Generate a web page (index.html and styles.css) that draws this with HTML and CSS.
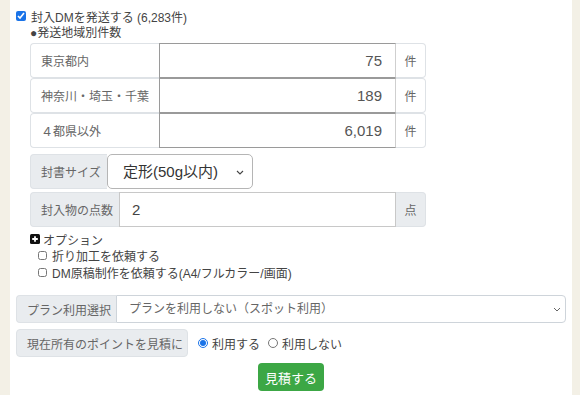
FILE: index.html
```html
<!DOCTYPE html>
<html lang="ja">
<head>
<meta charset="utf-8">
<title>封入DM</title>
<link rel="stylesheet" href="styles.css">
</head>
<body>
<div class="page">
  <label class="main-check"><input type="checkbox" class="chk" checked><span>封入DMを発送する (6,283件)</span></label>
  <div class="section">
    <div class="sub-title">●発送地域別件数</div>
    <div class="region-row">
      <div class="cell-label">東京都内</div>
      <input class="num" type="text" value="75">
      <div class="cell-unit">件</div>
    </div>
    <div class="region-row">
      <div class="cell-label">神奈川・埼玉・千葉</div>
      <input class="num" type="text" value="189">
      <div class="cell-unit">件</div>
    </div>
    <div class="region-row">
      <div class="cell-label">４都県以外</div>
      <input class="num" type="text" value="6,019">
      <div class="cell-unit">件</div>
    </div>

    <div class="group envelope">
      <div class="g-label">封書サイズ</div>
      <div class="select-wrap env-select">
        <select class="g-select"><option>定形(50g以内)</option></select>
        <svg class="chev" viewBox="0 0 8 5" width="8" height="5"><path d="M1 1 L4 4 L7 1" fill="none" stroke="#444" stroke-width="1.1"/></svg>
      </div>
    </div>

    <div class="group count">
      <div class="g-label">封入物の点数</div>
      <input class="g-input" type="text" value="2">
      <div class="g-unit">点</div>
    </div>

    <div class="option-head">
      <svg class="plus" viewBox="0 0 10 10" width="10" height="10"><rect x="0" y="0" width="10" height="10" rx="1.5" fill="#111"/><path d="M5 2.2 V7.8 M2.2 5 H7.8" stroke="#fff" stroke-width="1.8"/></svg>
      <span>オプション</span>
    </div>
    <ul class="option-list">
      <li><label><input type="checkbox" class="chk-sm"><span>折り加工を依頼する</span></label></li>
      <li><label><input type="checkbox" class="chk-sm"><span>DM原稿制作を依頼する(A4/フルカラー/画面)</span></label></li>
    </ul>
  </div>

  <div class="group plan">
    <div class="g-label">プラン利用選択</div>
    <div class="select-wrap plan-select">
      <select class="g-select"><option>プランを利用しない（スポット利用）</option></select>
      <svg class="chev" viewBox="0 0 8 5" width="8" height="5"><path d="M1 1 L4 4 L7 1" fill="none" stroke="#666" stroke-width="1"/></svg>
    </div>
  </div>

  <div class="group points">
    <div class="g-label">現在所有のポイントを見積に</div>
    <div class="radios">
      <label><input type="radio" name="pt" class="rad" checked><span>利用する</span></label>
      <label><input type="radio" name="pt" class="rad"><span>利用しない</span></label>
    </div>
  </div>

  <div class="actions"><button class="btn" type="button">見積する</button></div>
</div>
</body>
</html>
```

FILE: styles.css
```css
* { box-sizing: border-box; }
html, body { margin: 0; padding: 0; }
body {
  background: #f3f0e6;
  font-family: "Liberation Sans", "Noto Sans CJK JP", sans-serif;
  color: #444;
  font-size: 12px;
}
.page {
  margin: 0 8px 0 10px;
  background: #fff;
  min-height: 395px;
  padding: 8px 6px 0 6px;
}
.main-check {
  display: flex;
  align-items: center;
  height: 16px;
  font-size: 12px;
  color: #444;
}
.chk {
  width: 10px; height: 10px; margin: 0 5px 0 0;
  accent-color: #1a73e8;
}
.section { margin-left: 14px; }
.sub-title {
  height: 16px; line-height: 16px;
  margin-top: 1px;
  color: #444;
}
.region-row {
  display: flex;
  height: 35px;
  width: 396px;
}
.sub-title + .region-row { margin-top: 2px; }
.cell-label {
  width: 129px;
  border: 1px solid #dee2e6;
  border-right: none;
  border-radius: 4px 0 0 4px;
  padding-left: 10px;
  display: flex; align-items: center;
  color: #666;
}
.num {
  width: 237px;
  height: 35px;
  border: 1px solid #9a9a9a;
  border-right-color: #cfcfcf;
  margin: 0;
  padding: 0 13px 0 0;
  text-align: right;
  font-family: inherit;
  font-size: 15px;
  color: #555;
  outline: none;
}
.cell-unit {
  width: 30px;
  border: 1px solid #dee2e6;
  border-left: none;
  border-radius: 0 4px 4px 0;
  display: flex; align-items: center; justify-content: center;
  color: #666;
}
.group {
  display: flex;
  height: 35px;
}
.g-label {
  background: #e9ecef;
  border: 1px solid #dee2e6;
  border-radius: 4px 0 0 4px;
  padding: 0 10px;
  display: flex; align-items: center;
  color: #666;
  white-space: nowrap;
}
.envelope { margin-top: 6px; }
.envelope .g-label { width: 77px; border-right: none; }
.select-wrap { position: relative; }
.g-select {
  appearance: none;
  -webkit-appearance: none;
  width: 100%; height: 100%;
  margin: 0;
  background: #fff;
  font-family: inherit;
  outline: none;
}
.env-select { width: 146px; }
.env-select .g-select {
  border: 1px solid #b5b5b5;
  border-radius: 5px;
  padding: 0 0 0 15px;
  font-size: 15px;
  color: #333;
}
.chev { position: absolute; top: 50%; margin-top: -2px; }
.env-select .chev { right: 9px; }
.count { margin-top: 3px; }
.count .g-label { width: 89px; border-right: none; }
.g-input {
  width: 277px; height: 35px;
  margin: 0;
  border: 1px solid #c8c8c8;
  padding: 0 0 0 12px;
  font-family: inherit;
  font-size: 15px;
  color: #444;
  outline: none;
}
.g-unit {
  width: 30px;
  background: #e9ecef;
  border: 1px solid #dee2e6;
  border-left: none;
  border-radius: 0 4px 4px 0;
  display: flex; align-items: center; justify-content: center;
  color: #666;
}
.option-head {
  margin-top: 4px;
  height: 16px;
  display: flex; align-items: center;
  gap: 3px;
  color: #444;
}
.plus { display: block; }
.option-list {
  list-style: none;
  margin: 0; padding: 0 0 0 8px;
}
.option-list li { height: 17px; }
.option-list label {
  display: flex; align-items: center; height: 17px;
  color: #444;
}
.chk-sm { width: 9px; height: 9px; margin: 0 5px 0 0; }
.plan { margin-top: 14px; height: 28px; }
.plan .g-label { width: 100px; border-right: none; }
.plan-select { flex: 1; }
.plan-select .g-select {
  border: 1px solid #ced4da;
  border-radius: 0 4px 4px 0;
  padding: 0 0 0 12px;
  font-size: 12px;
  color: #666;
}
.plan-select .chev { right: 5px; }
.points { margin-top: 6px; height: 28px; }
.points .g-label { width: 172px; border-radius: 4px; }
.radios {
  display: flex; align-items: center;
  padding-left: 10px;
  gap: 8px;
}
.radios label { display: flex; align-items: center; color: #444; }
.rad { width: 10px; height: 10px; margin: 0 4px 0 0; accent-color: #1a73e8; }
.actions {
  display: flex; justify-content: center;
  margin-top: 6px;
}
.btn {
  width: 66px; height: 28px;
  background: #3ca745;
  border: none;
  border-radius: 4px;
  color: #fff;
  font-family: inherit;
  font-size: 13px;
  padding: 0;
}
```
